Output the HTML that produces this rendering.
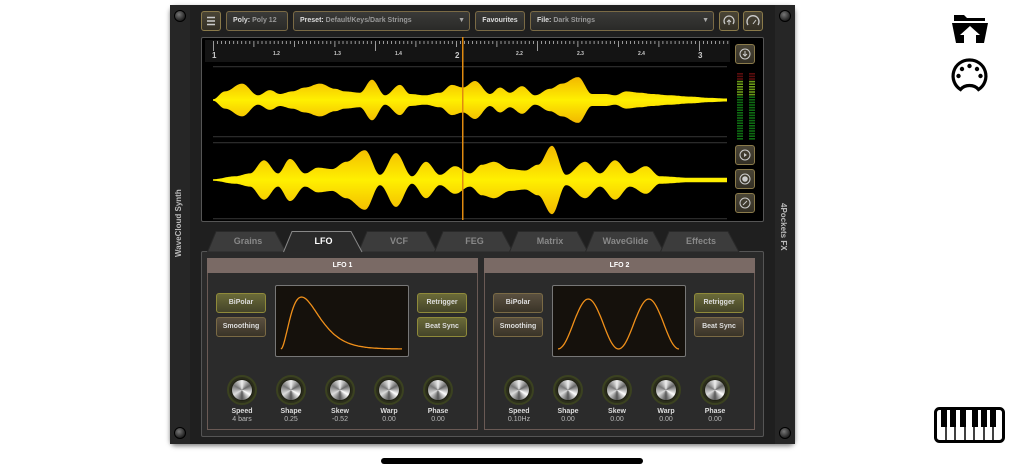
<!DOCTYPE html>
<html><head><meta charset="utf-8"><style>
*{margin:0;padding:0;box-sizing:border-box}
body{width:1024px;height:473px;background:#fff;position:relative;overflow:hidden;font-family:"Liberation Sans",sans-serif;font-weight:bold}
.a{position:absolute}
#synth{left:170px;top:5px;width:625px;height:439px;background:#1f1f1f;border-radius:6px;box-shadow:0 2px 5px rgba(0,0,0,.5)}
.rail{top:0;width:20px;height:439px;background:#262626}
.screw{width:12px;height:12px;border-radius:50%;background:radial-gradient(circle at 40% 35%,#777,#222 70%);border:1px solid #000}
.btn{height:20px;border:1px solid #7a6a45;border-radius:3px;background:linear-gradient(#3a3a38,#2a2a28);color:#999;font-size:7px;line-height:18px;padding-left:6px;white-space:nowrap}
.btn b{color:#ddd}
.sq{width:20px;height:20px;border:1px solid #8a7a4a;border-radius:3px;background:linear-gradient(#4a4536,#332f25)}
.tab{top:230px;height:22px;color:#888;font-size:9px;text-align:center;line-height:22px}
.tab svg{position:absolute;left:0;top:0}
.tab span{position:relative}
.lbtn{width:50px;height:20px;border:1px solid #8f8a3a;border-radius:3px;background:linear-gradient(#6a6a38,#45452a);color:#ddd;font-size:7px;text-align:center;line-height:18px}
.lbtn.off{border-color:#7a6a45;background:linear-gradient(#5a5040,#3a3428)}
.knob{width:30px;height:30px;border-radius:50%;background:#2d2f1d;border:2px solid #3b4220}
.knob i{position:absolute;left:3px;top:3px;width:20px;height:20px;border-radius:50%;background:conic-gradient(#eee,#666,#fff,#555,#ddd,#777,#eee);box-shadow:0 0 2px #000}
.kl{width:40px;text-align:center;color:#ddd;font-size:7px;line-height:8px}
.kl span{font-weight:normal;color:#bbb}
</style></head><body>
<div id="synth" class="a">
 <div class="a rail" style="left:0"></div>
 <div class="a rail" style="right:0"></div>
 <div class="a screw" style="left:4px;top:5px"></div>
 <div class="a screw" style="right:4px;top:5px"></div>
 <div class="a screw" style="left:4px;top:422px"></div>
 <div class="a screw" style="right:4px;top:422px"></div>
 <div class="a" style="left:4px;top:252px;transform:rotate(-90deg);transform-origin:0 0;color:#bbb;font-size:8px;white-space:nowrap">WaveCloud Synth</div>
 <div class="a" style="left:618px;top:198px;transform:rotate(90deg);transform-origin:0 0;color:#bbb;font-size:8px;white-space:nowrap">4Pockets FX</div>
</div>
<div class="a sq" style="left:201px;top:11px"><svg width="18" height="18" class="a"><path d="M5 5.5h8M5 9h8M5 12.5h8" stroke="#ccc" stroke-width="1.5"/></svg></div>
<div class="a btn" style="left:226px;top:11px;width:62px"><b>Poly:</b> Poly 12</div>
<div class="a btn" style="left:293px;top:11px;width:177px"><b>Preset:</b> Default/Keys/Dark Strings<span style="position:absolute;right:4px;color:#aaa">▼</span></div>
<div class="a btn" style="left:475px;top:11px;width:50px;padding:0;text-align:center"><b>Favourites</b></div>
<div class="a btn" style="left:530px;top:11px;width:184px"><b>File:</b> Dark Strings<span style="position:absolute;right:4px;color:#aaa">▼</span></div>
<div class="a sq" style="left:719px;top:11px"><svg width="18" height="18" class="a"><path d="M5 12a5 5 0 1 1 8 0" stroke="#ccc" fill="none" stroke-width="1.3"/><path d="M9 13V8M7 10l2-2 2 2" stroke="#ccc" fill="none"/></svg></div>
<div class="a sq" style="left:743px;top:11px"><svg width="18" height="18" class="a"><path d="M4 13a6 6 0 1 1 10 0" stroke="#ccc" fill="none" stroke-width="1.3"/><path d="M9 12l3-4" stroke="#ccc"/></svg></div>
<div class="a" style="left:201px;top:37px;width:563px;height:185px;background:#000;border:1px solid #555;border-radius:2px"></div>
<div class="a" style="left:205px;top:40px;width:525px;height:22px;background:#141414"></div>
<svg class="a" id="wv" style="left:0;top:0" width="1024" height="473"></svg>
<div class="a sq" style="left:735px;top:44px"><svg width="18" height="18" class="a"><circle cx="9" cy="9" r="5" stroke="#ccc" fill="none"/><path d="M9 6v5M7 9l2 2 2-2" stroke="#ccc" fill="none"/></svg></div>
<div class="a sq" style="left:735px;top:145px"><svg width="18" height="18" class="a"><circle cx="9" cy="9" r="5" stroke="#ccc" fill="none"/><path d="M8 7v4l3-2z" fill="#ccc"/></svg></div>
<div class="a sq" style="left:735px;top:169px"><svg width="18" height="18" class="a"><circle cx="9" cy="9" r="5" stroke="#ccc" fill="none"/><circle cx="9" cy="9" r="2.8" fill="#ccc"/></svg></div>
<div class="a sq" style="left:735px;top:193px"><svg width="18" height="18" class="a"><circle cx="9" cy="9" r="5" stroke="#ccc" fill="none"/><path d="M7 11l4-4" stroke="#ccc"/></svg></div>
<div class="a" style="left:201px;top:251px;width:563px;height:186px;border:1px solid #555;border-radius:2px;background:#2a2a2a"></div>
<div id="tabs"></div>
<div id="lfos"></div>
<svg class="a" style="left:950px;top:13px" width="40" height="32"><path d="M4 2h10l3 3h18v3H4z" fill="#000"/><path d="M2 10h36l-4 20H26v-8h4l-10-9-10 9h4v8H6z" fill="#000"/></svg>
<svg class="a" style="left:950px;top:57px" width="40" height="38"><path d="M19.5 3a16 16 0 0 0-9 29.5c2-2.5 5-4 9-4s7 1.5 9 4A16 16 0 0 0 19.5 3z" fill="none" stroke="#000" stroke-width="3.2"/><circle cx="19.5" cy="9" r="2.2"/><circle cx="12" cy="12" r="2.2"/><circle cx="27" cy="12" r="2.2"/><circle cx="8.5" cy="19" r="2.2"/><circle cx="30.5" cy="19" r="2.2"/></svg>
<svg class="a" style="left:934px;top:407px" width="72" height="38"><rect x="1.5" y="1.5" width="68" height="33" rx="4" fill="#fff" stroke="#000" stroke-width="3"/><g stroke="#000" stroke-width="1.5"><path d="M12 20v14M21 20v14M31 20v14M40 20v14M50 20v14M59 20v14"/></g><g fill="#000"><rect x="7" y="2" width="6" height="18"/><rect x="16" y="2" width="6" height="18"/><rect x="26" y="2" width="6" height="18"/><rect x="38" y="2" width="6" height="18"/><rect x="47" y="2" width="6" height="18"/><rect x="56" y="2" width="6" height="18"/></g></svg>
<div class="a" style="left:381px;top:458px;width:262px;height:6px;border-radius:3px;background:#000"></div>
<script>
var svg=document.getElementById('wv'),h='';
h+='<defs><linearGradient id="g" x1="0" y1="0" x2="0" y2="1"><stop offset="0" stop-color="#f2b800"/><stop offset=".5" stop-color="#fff000"/><stop offset="1" stop-color="#f2b800"/></linearGradient></defs>';
for(var i=0;i<=130;i++){var x=213+i*(486/120);if(x>728)break;var big=i%40==0,mid=i%10==0;h+='<rect x="'+x.toFixed(1)+'" y="41" width="0.8" height="'+(big?10:mid?6:3)+'" fill="#bbb"/>';}
var labs=[[213,'1',1],[274,'1.2'],[335,'1.3'],[396,'1.4'],[456,'2',1],[517,'2.2'],[578,'2.3'],[639,'2.4'],[699,'3',1]];
labs.forEach(function(l){h+='<text x="'+(l[0]-1)+'" y="'+(l[2]?58:55)+'" fill="#ccc" font-size="'+(l[2]?8:5)+'" font-family="Liberation Sans">'+l[1]+'</text>';});
[66,136,142,218].forEach(function(y){h+='<rect x="213" y="'+y+'" width="514" height="1.3" fill="#2a2a2a"/>';});
function wave(pts,cy,k){var top=[],bot=[];for(var x=213;x<=727;x+=1){var j=0;while(j<pts.length-2&&pts[j+1][0]<x)j++;var a=pts[j],b=pts[j+1],t=(x-a[0])/(b[0]-a[0]);t=Math.max(0,Math.min(1,t));var s=(1-Math.cos(t*Math.PI))/2,v=(a[1]+(b[1]-a[1])*s)*k+0.8;top.push(x+','+(cy-v).toFixed(1));bot.unshift(x+','+(cy+v).toFixed(1));}
return '<polygon points="'+top.concat(bot).join(' ')+'" fill="url(#g)"/>';}
var T=[[213,0],[225,6],[242,12],[258,3],[270,7],[280,4],[292,6],[305,9],[320,12],[335,8],[345,6],[360,5],[372,15],[385,3],[400,11],[410,4],[425,3],[440,5],[452,11],[463,9],[475,14],[490,4],[500,9],[510,5],[522,10],[535,3],[550,8],[562,12],[578,17],[592,4],[606,4],[615,3],[626,6],[640,5],[652,4],[670,3],[690,2],[710,1],[727,0.5]];
var B=[[213,0],[235,2],[250,4],[264,13],[278,4],[290,14],[305,4],[318,8],[332,7],[346,12],[365,20],[380,3],[396,18],[412,2],[426,12],[440,3],[455,9],[470,4],[482,10],[494,12],[510,7],[525,6],[538,10],[552,23],[566,3],[585,12],[600,4],[615,13],[630,4],[646,9],[660,2],[690,1],[727,1]];
h+=wave(T,100,1.3)+wave(B,180,1.45);
h+='<rect x="462" y="37" width="1.5" height="183" fill="#e08a10"/>';
for(var k=0;k<26;k++){var y=73+k*2.6,c=k<3?'#5a0d0d':k<9?'#6a9a18':'#0e6a12';h+='<rect x="737" y="'+y+'" width="6" height="1.6" fill="'+c+'"/><rect x="749" y="'+y+'" width="6" height="1.6" fill="'+c+'"/>';}
svg.innerHTML=h;
var tabs=['Grains','LFO','VCF','FEG','Matrix','WaveGlide','Effects'],th='';
tabs.forEach(function(n,i){var x=207+i*75.5,act=i==1;th+='<div class="a tab" style="left:'+x+'px;width:82px;'+(act?'color:#fff;z-index:2':'')+'"><svg width="82" height="23"><path d="M0.5 22 L9 1.5 H68 L79 22'+(act?'':'z')+'" fill="'+(act?'#2a2a2a':'#3c3c3c')+'" stroke="'+(act?'#888':'#2a2a2a')+'"/></svg><span>'+n+'</span></div>';});
document.getElementById('tabs').innerHTML=th;
function panel(x,title,on,curve,vals){var s='<div class="a" style="left:'+x+'px;top:258px;width:271px;height:172px;border:1px solid #6a5a55;background:#2b2b2b"></div><div class="a" style="left:'+x+'px;top:258px;width:271px;height:15px;background:#7a6a65;color:#fff;font-size:7px;text-align:center;line-height:15px">'+title+'</div>';
var bl=[['BiPolar',on[0],9,35],['Smoothing',on[1],9,59],['Retrigger',on[2],210,35],['Beat Sync',on[3],210,59]];
bl.forEach(function(b){s+='<div class="a lbtn'+(b[1]?'':' off')+'" style="left:'+(x+b[2])+'px;top:'+(258+b[3])+'px">'+b[0]+'</div>';});
s+='<div class="a" style="left:'+(x+68)+'px;top:285px;width:134px;height:72px;background:#15110c;border:1px solid #777;border-radius:2px"><svg width="132" height="70"><path d="'+curve+'" stroke="#f0901a" stroke-width="1.3" fill="none"/></svg></div>';
var names=['Speed','Shape','Skew','Warp','Phase'];
names.forEach(function(n,i){var cx=x+35+i*49;s+='<div class="a knob" style="left:'+(cx-15)+'px;top:375px"><i></i></div><div class="a kl" style="left:'+(cx-20)+'px;top:408px">'+n+'<br><span>'+vals[i]+'</span></div>';});
return s;}
var c1='M5 63';for(var t=0;t<=1.0001;t+=0.01){var X=5+t*121,u=t/0.17,Y=63-52*u*u*Math.exp(2-2*u);c1+=' L'+X.toFixed(1)+' '+Y.toFixed(1);}
var c2='M5 63';for(var t=0;t<=1.0001;t+=0.01){var X=5+t*121;c2+=' L'+X.toFixed(1)+' '+(38+25*Math.cos(t*4*Math.PI)).toFixed(1);}
document.getElementById('lfos').innerHTML=panel(207,'LFO 1',[1,0,1,1],c1,['4 bars','0.25','-0.52','0.00','0.00'])+panel(484,'LFO 2',[0,0,1,0],c2,['0.10Hz','0.00','0.00','0.00','0.00']);
</script>
</body></html>
